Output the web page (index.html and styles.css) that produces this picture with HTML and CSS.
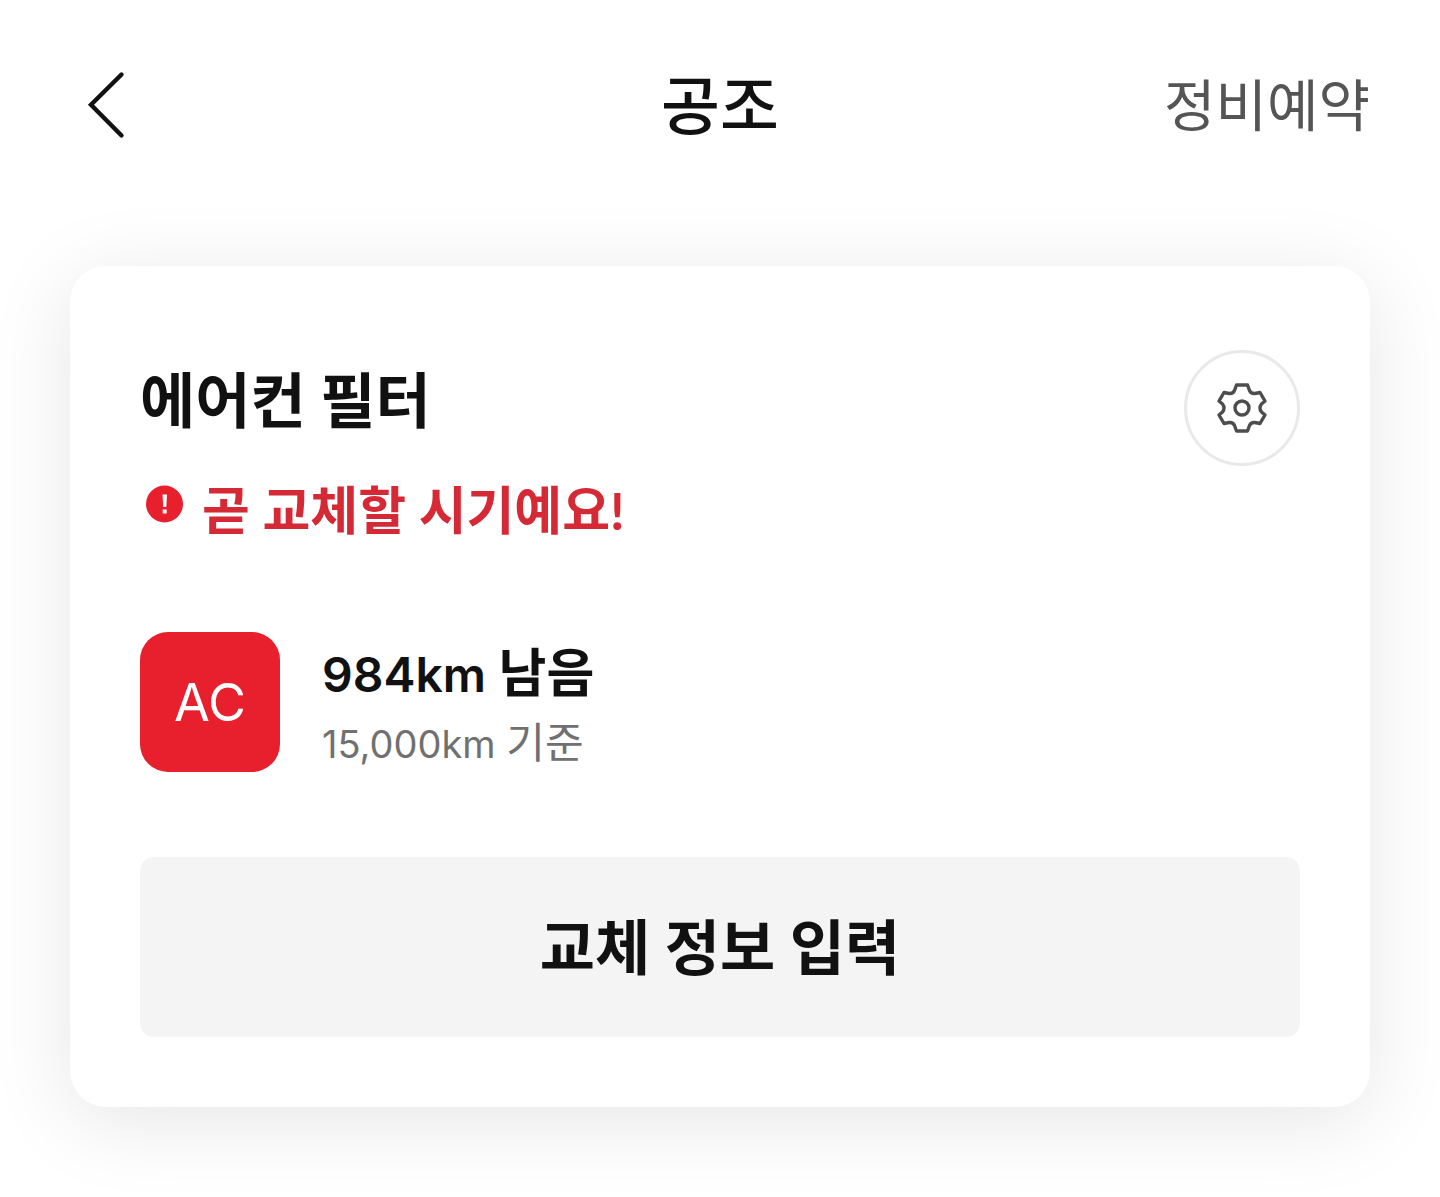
FILE: index.html
```html
<!DOCTYPE html>
<html lang="ko">
<head>
<meta charset="utf-8">
<meta name="viewport" content="width=device-width, initial-scale=1">
<title>공조</title>
<link rel="stylesheet" href="styles.css">
</head>
<body>
<header class="topbar">
  <button class="back" type="button" aria-label="뒤로">
    <svg width="40" height="70" viewBox="0 0 40 70" fill="none" stroke="#111" stroke-width="4.400" stroke-linecap="round" stroke-linejoin="miter" aria-hidden="true">
      <path d="M35.500 4.500 5 34.700 35.500 65.500"/>
    </svg>
  </button>
  <h1 class="page-title">공조</h1>
  <a class="booking" href="#booking">정비예약</a>
</header>
<main class="content">
  <section class="card">
    <div class="card-head">
      <div class="summary">
        <h2 class="item-name">에어컨 필터</h2>
        <p class="alert">
          <svg class="alert-icon" width="38" height="38" viewBox="0 0 38 38" aria-hidden="true">
            <circle cx="18.500" cy="19" r="18.500" fill="#e81f2c"/>
            <path d="M16.500 9.500h4.500l-.7 12.500h-3.100zM16.700 24.500h4v4h-4z" fill="#fff"/>
          </svg>
          <span>곧 교체할 시기예요!</span>
        </p>
      </div>
      <button class="settings" type="button" aria-label="설정">
        <svg width="54" height="54" viewBox="-27 -27 54 54" fill="none" stroke="#4d4d4d" stroke-width="3.400" stroke-linejoin="round" aria-hidden="true">
          <path d="M-5.500-23H5.500L7.500-17.500Q9-14 13-14.500L18-15.500 23-7 19.500-4Q16.500 0 19.500 4L23 7 18 15.500 13 14.500Q9 14 7.500 17.500L5.500 23H-5.500L-7.500 17.500Q-9 14-13 14.500L-18 15.500-23 7-19.500 4Q-16.500 0-19.500-4L-23-7-18-15.500-13-14.500Q-9-14-7.500-17.500Z"/>
          <circle r="7"/>
        </svg>
      </button>
    </div>
    <div class="status">
      <div class="badge">AC</div>
      <div class="status-text">
        <p class="remaining"><span class="distance">984km</span> 남음</p>
        <p class="basis"><span class="distance">15,000km</span> 기준</p>
      </div>
    </div>
    <button class="primary" type="button">교체 정보 입력</button>
  </section>
</main>
</body>
</html>
```
FILE: styles.css
```css
* {
  box-sizing: border-box;
  margin: 0;
}

body {
  background: #fff;
  color: #111;
  font-family: Lato, "Noto Sans CJK KR", sans-serif;
}

button {
  padding: 0;
  border: 0;
  background: none;
  color: inherit;
  font: inherit;
  cursor: pointer;
}

svg {
  display: block;
}

.topbar {
  display: grid;
  grid-template-columns: 1fr auto 1fr;
  align-items: center;
  height: 210px;
  padding: 0 70px;
}

.back {
  justify-self: start;
  padding-left: 16px;
}

.page-title {
  font-size: 64px;
  font-weight: 500;
  line-height: 92px;
}

.booking {
  justify-self: end;
  color: #555;
  font-size: 56px;
  line-height: 80px;
  text-decoration: none;
}

.content {
  padding: 56px 70px 90px;
}

.card {
  padding: 84px 70px 70px;
  border-radius: 36px;
  background: #fff;
  box-shadow: 0 14px 84px rgba(0, 0, 0, 0.1);
}

.card-head {
  display: flex;
  justify-content: space-between;
  align-items: flex-start;
}

.summary {
  padding-top: 6px;
}

.item-name {
  font-size: 60px;
  font-weight: 700;
  line-height: 88px;
}

.alert {
  display: flex;
  align-items: center;
  gap: 18px;
  margin-top: 28px;
  padding-left: 6px;
  color: #d52a36;
  font-size: 52px;
  font-weight: 700;
  line-height: 76px;
}

.alert-icon {
  margin-bottom: 12px;
}

.settings {
  display: grid;
  place-items: center;
  flex: none;
  width: 116px;
  height: 116px;
  border: 3px solid #e9e9e9;
  border-radius: 50%;
}

.status {
  display: flex;
  align-items: center;
  gap: 42px;
  margin-top: 84px;
}

.badge {
  display: grid;
  place-items: center;
  width: 140px;
  height: 140px;
  border-radius: 28px;
  background: #e81f2c;
  color: #fff;
  font-family: Inter, sans-serif;
  font-size: 52px;
}

.remaining {
  font-size: 52px;
  font-weight: 700;
  line-height: 80px;
}

.basis {
  color: #707070;
  font-size: 42px;
  line-height: 60px;
}

.distance {
  font-family: Inter, sans-serif;
  line-height: 1;
}

.remaining .distance {
  font-size: 48px;
  font-weight: 600;
}

.basis .distance {
  font-size: 38px;
}

.primary {
  display: block;
  width: 100%;
  margin-top: 85px;
  padding: 46px 0;
  border-radius: 14px;
  background: #f4f4f4;
  font-size: 60px;
  font-weight: 700;
  line-height: 88px;
}
```
